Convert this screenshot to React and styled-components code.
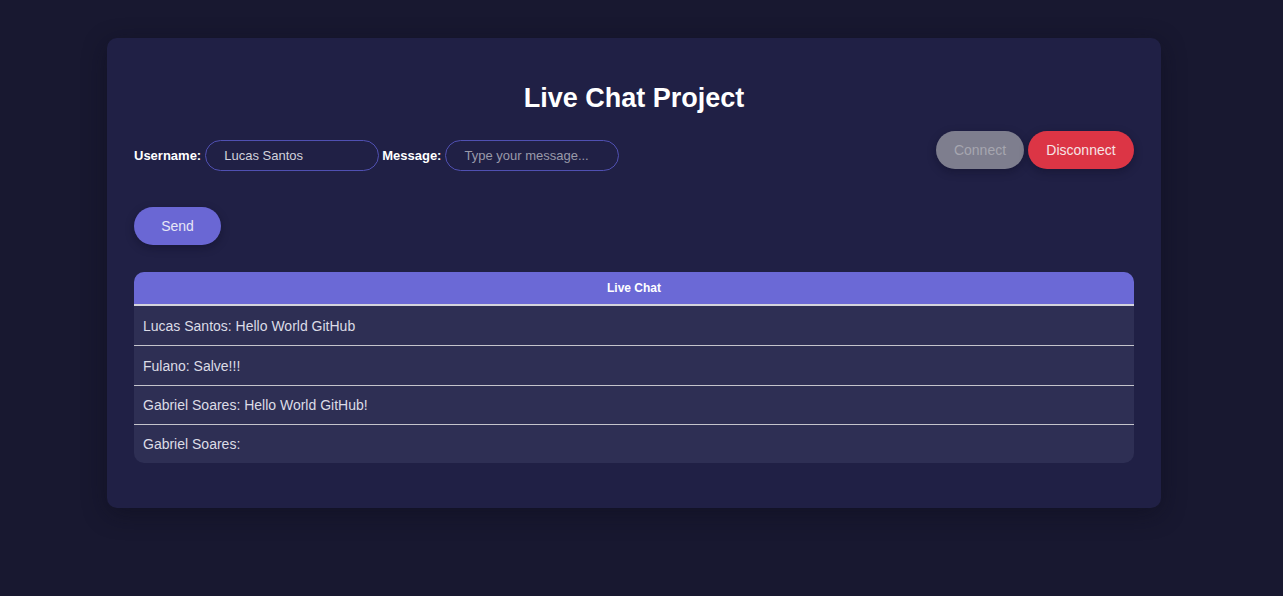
import React from "react";
import styled, { createGlobalStyle } from "styled-components";

const Global = createGlobalStyle`
  html, body { margin: 0; padding: 0; background: #181830; }
  body { font-family: "Liberation Sans", Arial, sans-serif; min-height: 596px; }
`;

const Page = styled.div`
  padding: 38px 0 0 107px;
`;

const Card = styled.div`
  width: 1000px;
  padding: 27px 27px 45px;
  background: #202045;
  border-radius: 10px;
  box-shadow: 0 6px 24px rgba(10, 10, 25, 0.45);
`;

const Title = styled.h1`
  margin: 18px 0 18px;
  font-size: 27px;
  line-height: 30px;
  font-weight: 700;
  color: #ffffff;
  text-align: center;
`;

const FormRow = styled.div`
  display: flex;
  justify-content: space-between;
  align-items: flex-start;
`;

const Fields = styled.div`
  display: flex;
  align-items: center;
  gap: 3px;
  padding-top: 9px;
`;

const Label = styled.label`
  font-size: 13px;
  font-weight: 700;
  color: #ffffff;
  margin-right: 1px;
`;

const Input = styled.input`
  box-sizing: border-box;
  width: 174px;
  height: 31px;
  padding: 0 18px;
  border: 1.5px solid #5050b2;
  border-radius: 16px;
  background: transparent;
  color: #d2d2dc;
  font-family: "Liberation Sans", Arial, sans-serif;
  font-size: 13px;
  outline: none;
  &::placeholder { color: #9a9aaa; }
`;

const Actions = styled.div`
  display: flex;
  gap: 4px;
`;

const Pill = styled.button`
  box-sizing: border-box;
  height: 38px;
  width: ${(p) => p.$w}px;
  border: none;
  border-radius: 19px;
  background: ${(p) => p.$bg};
  color: ${(p) => p.$fg};
  font-family: "Liberation Sans", Arial, sans-serif;
  font-size: 14px;
  box-shadow: 0 3px 8px rgba(10, 10, 30, 0.35);
  cursor: pointer;
`;

const SendWrap = styled.div`
  margin-top: 36px;
  margin-bottom: 27px;
  height: 38px;
`;

const Chat = styled.div`
  border-radius: 10px;
  overflow: hidden;
  background: #2e2f54;
`;

const ChatHead = styled.div`
  height: 32px;
  display: flex;
  align-items: center;
  justify-content: center;
  background: #6b69d6;
  color: #ffffff;
  font-size: 12px;
  font-weight: 700;
  border-bottom: 2px solid #d4d4dc;
`;

const ChatRow = styled.div`
  box-sizing: border-box;
  height: ${(p) => p.$h}px;
  display: flex;
  align-items: center;
  padding-left: 9px;
  color: #dcdce6;
  font-size: 14px;
  border-top: ${(p) => (p.$first ? "none" : "1.5px solid #c4c4cc")};
`;

const messages = [
  { text: "Lucas Santos: Hello World GitHub", h: 39 },
  { text: "Fulano: Salve!!!", h: 40 },
  { text: "Gabriel Soares: Hello World GitHub!", h: 39 },
  { text: "Gabriel Soares:", h: 39 },
];

export default function App() {
  return (
    <>
      <Global />
      <Page>
        <Card>
          <Title>Live Chat Project</Title>
          <FormRow>
            <Fields>
              <Label>Username:</Label>
              <Input defaultValue="Lucas Santos" />
              <Label>Message:</Label>
              <Input placeholder="Type your message..." />
            </Fields>
            <Actions>
              <Pill $w={88} $bg="#7e7e8e" $fg="#a6a6b0">Connect</Pill>
              <Pill $w={106} $bg="#dc3545" $fg="#f6e4e6">Disconnect</Pill>
            </Actions>
          </FormRow>
          <SendWrap>
            <Pill $w={87} $bg="#6a67d4" $fg="#e6e6f6">Send</Pill>
          </SendWrap>
          <Chat>
            <ChatHead>Live Chat</ChatHead>
            {messages.map((m, i) => (
              <ChatRow key={i} $h={m.h} $first={i === 0}>
                {m.text}
              </ChatRow>
            ))}
          </Chat>
        </Card>
      </Page>
    </>
  );
}
